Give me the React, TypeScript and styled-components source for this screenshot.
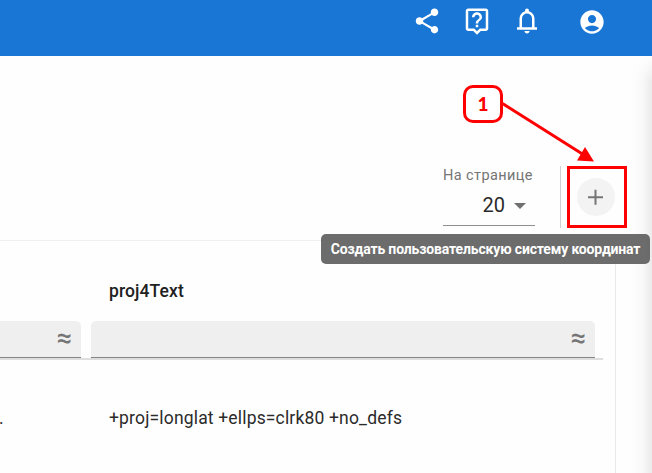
import React from "react";
import styled, { createGlobalStyle } from "styled-components";

const GlobalStyle = createGlobalStyle`
  * { box-sizing: border-box; }
  body { margin: 0; background: #fff; font-family: Roboto, "Liberation Sans", sans-serif; }
`;

const Page = styled.div`
  position: relative;
  width: 652px;
  height: 473px;
  overflow: hidden;
  display: flex;
  flex-direction: column;
  background: #fefefe;
`;

const Header = styled.header`
  height: 56px;
  flex: none;
  display: flex;
  align-items: flex-start;
  justify-content: flex-end;
  padding: 6px 44px 0 0;
  background: #1976d5;
`;

const HeaderButton = styled.button<{ $size?: number; $gap: number; $top?: number }>`
  width: ${(p) => p.$size ?? 30}px;
  height: ${(p) => p.$size ?? 30}px;
  margin: ${(p) => p.$top ?? 0}px ${(p) => p.$gap}px 0 0;
  padding: 0;
  border: 0;
  background: none;
  color: #fff;
  svg { display: block; width: 100%; height: 100%; fill: currentColor; }
`;

const Body = styled.div`
  flex: 1;
  min-height: 0;
  display: flex;
`;

const Content = styled.main`
  width: 616px;
  display: flex;
  flex-direction: column;
`;

const Toolbar = styled.div`
  height: 184px;
  flex: none;
  display: flex;
  justify-content: flex-end;
  align-items: flex-start;
  padding-top: 110px;
`;

const PageSize = styled.div`
  width: 92px;
  height: 60px;
  margin-right: 25px;
  display: flex;
  flex-direction: column;
  border-bottom: 1px solid #8f8f8f;
`;

const FieldLabel = styled.label`
  height: 19px;
  font-size: 14.5px;
  line-height: 19px;
  letter-spacing: 0.4px;
  color: #757575;
  white-space: nowrap;
`;

const SelectValue = styled.div`
  height: 41px;
  display: flex;
  align-items: center;
  justify-content: flex-end;
  padding-right: 9px;
  gap: 9px;
  font-size: 20px;
  line-height: 24px;
  color: #2b2b2b;
`;

const Caret = styled.span`
  border: 6.5px solid transparent;
  border-top-color: #707070;
  border-bottom: 0;
  margin-top: 2px;
`;

const AddArea = styled.div`
  width: 56px;
  height: 62px;
  border-left: 1px solid #cfcfcf;
  display: flex;
  align-items: center;
  padding-left: 16px;
`;

const AddButton = styled.button`
  width: 38px;
  height: 38px;
  flex: none;
  padding: 0;
  border: 0;
  border-radius: 50%;
  background: #f3f3f3;
  display: grid;
  place-items: center;
`;

const Table = styled.section`
  flex: 1;
  border-top: 1px solid #f0f0f0;
  border-right: 1px solid #e9e9e9;
`;

const Row = styled.div<{ $height: number }>`
  height: ${(p) => p.$height}px;
  width: 603px;
  display: grid;
  grid-template-columns: 81px 504px;
  column-gap: 10px;
  align-items: center;
`;

const HeadCell = styled.div`
  grid-column: 2;
  padding: 20px 0 0 18px;
  font-size: 17.5px;
  font-weight: 500;
  line-height: 22px;
  letter-spacing: 0.1px;
  color: #212121;
`;

const Cell = styled.div<{ $inset: number }>`
  padding: 2px 0 0 ${(p) => p.$inset}px;
  font-size: 17.5px;
  line-height: 22px;
  letter-spacing: 0.17px;
  color: #2b2b2b;
  white-space: nowrap;
`;

const LeadingCell = styled(Cell)`
  margin-left: -1px;
`;

const FilterRow = styled(Row)`
  border-bottom: 2px solid #dedede;
  align-items: stretch;
`;

const Filter = styled.div<{ $first?: boolean }>`
  display: flex;
  align-items: center;
  justify-content: flex-end;
  padding-right: 9px;
  background: #efefef;
  border-bottom: 1px solid #858585;
  border-radius: ${(p) => (p.$first ? "0 5px 0 0" : "5px 5px 0 0")};
`;

const Operator = styled.span`
  font-size: 27px;
  font-weight: 500;
  line-height: 28px;
  padding-bottom: 2px;
  color: #757575;
`;

const SideShade = styled.aside`
  flex: 1;
  background:
    linear-gradient(to bottom, #fefefe, rgba(254, 254, 254, 0) 26px),
    linear-gradient(to right, #fefefe 40%, #f9f9f9 72%, #ebebeb);
`;

const Tooltip = styled.div`
  position: absolute;
  left: 321px;
  top: 234px;
  width: 329px;
  height: 30px;
  border-radius: 5px;
  background: rgba(97, 97, 97, 0.93);
  color: #fff;
  font-size: 14px;
  font-weight: 700;
  letter-spacing: -0.15px;
  line-height: 30px;
  text-align: center;
  white-space: nowrap;
`;

const Highlight = styled.div`
  position: absolute;
  left: 567px;
  top: 166px;
  width: 60px;
  height: 62px;
  border: 3px solid #f00;
`;

const Marker = styled.div`
  position: absolute;
  left: 463px;
  top: 85px;
  width: 40px;
  height: 38px;
  border: 3px solid #f00;
  border-radius: 10px;
  background: #fff;
  color: #f00;
  font: 900 19px/31px Lato, sans-serif;
  text-align: center;
`;

const Arrow = styled.svg`
  position: absolute;
  left: 500px;
  top: 98px;
`;

export default function App() {
  return (
    <>
      <GlobalStyle />
      <Page>
        <Header>
          <HeaderButton $gap={20} aria-label="Share">
            <svg viewBox="0 0 24 24">
              <path d="M18 16.08c-.76 0-1.44.3-1.96.77L8.91 12.7c.05-.23.09-.46.09-.7s-.04-.47-.09-.7l7.05-4.11c.54.5 1.25.81 2.04.81 1.66 0 3-1.34 3-3s-1.34-3-3-3-3 1.34-3 3c0 .24.04.47.09.7L8.04 9.81C7.5 9.31 6.79 9 6 9c-1.66 0-3 1.34-3 3s1.34 3 3 3c.79 0 1.5-.31 2.04-.81l7.12 4.16c-.05.21-.08.43-.08.65 0 1.61 1.31 2.92 2.92 2.92s2.92-1.31 2.92-2.92-1.31-2.92-2.92-2.92z" />
            </svg>
          </HeaderButton>
          <HeaderButton $gap={20} aria-label="Help">
            <svg viewBox="0 0 24 24">
              <path d="M19 2H5c-1.11 0-2 .9-2 2v14c0 1.1.89 2 2 2h4l3 3 3-3h4c1.1 0 2-.9 2-2V4c0-1.1-.9-2-2-2zm0 16h-4.83l-.59.59L12 20.17l-1.59-1.59-.58-.58H5V4h14v14zm-8-3h2v2h-2zm1-8c1.1 0 2 .9 2 2 0 2-3 1.75-3 5h2c0-2.25 3-2.5 3-5 0-2.21-1.79-4-4-4s-4 1.79-4 4h2c0-1.1.9-2 2-2z" />
            </svg>
          </HeaderButton>
          <HeaderButton $gap={36} aria-label="Notifications">
            <svg viewBox="0 -960 960 960">
              <path d="M160-200v-80h80v-280q0-83 50-147.5T420-792v-28q0-25 17.5-42.5T480-880t42.5 17.5T540-820v28q80 20 130 84.5T720-560v280h80v80H160Zm320 120q-33 0-56.5-23.5T400-160h160q0 33-23.5 56.5T480-80ZM320-280h320v-280q0-66-47-113t-113-47q-66 0-113 47t-47 113v280Z" />
            </svg>
          </HeaderButton>
          <HeaderButton $size={28} $gap={2} $top={2} aria-label="Account">
            <svg viewBox="0 0 24 24">
              <path d="M12 2C6.48 2 2 6.48 2 12s4.48 10 10 10 10-4.48 10-10S17.52 2 12 2zm0 4c1.93 0 3.5 1.57 3.5 3.5S13.93 13 12 13s-3.5-1.57-3.5-3.5S10.07 6 12 6zm0 14c-2.03 0-4.43-.82-6.14-2.88C7.55 15.8 9.68 15 12 15s4.45.8 6.14 2.12C16.43 19.18 14.03 20 12 20z" />
            </svg>
          </HeaderButton>
        </Header>
        <Body>
          <Content>
            <Toolbar>
              <PageSize>
                <FieldLabel>На странице</FieldLabel>
                <SelectValue>
                  20
                  <Caret />
                </SelectValue>
              </PageSize>
              <AddArea>
                <AddButton aria-label="Создать">
                  <svg width="16" height="16" viewBox="0 0 16 16" stroke="#757575" strokeWidth="2">
                    <path d="M7.5 .8v15M0 8.3h15" />
                  </svg>
                </AddButton>
              </AddArea>
            </Toolbar>
            <Table>
              <Row $height={80}>
                <HeadCell>proj4Text</HeadCell>
              </Row>
              <FilterRow $height={39}>
                <Filter $first>
                  <Operator>≈</Operator>
                </Filter>
                <Filter>
                  <Operator>≈</Operator>
                </Filter>
              </FilterRow>
              <Row $height={114}>
                <LeadingCell $inset={0}>.</LeadingCell>
                <Cell $inset={18}>+proj=longlat +ellps=clrk80 +no_defs</Cell>
              </Row>
            </Table>
          </Content>
          <SideShade />
        </Body>
        <Tooltip>Создать пользовательскую систему координат</Tooltip>
        <Highlight />
        <Marker>1</Marker>
        <Arrow width="96" height="66" viewBox="0 0 96 66">
          <path d="M2.5 5.5 84 57" stroke="#f00" strokeWidth="3" />
          <path d="M94 63.5 77 62.5 85 49z" fill="#f00" />
        </Arrow>
      </Page>
    </>
  );
}
